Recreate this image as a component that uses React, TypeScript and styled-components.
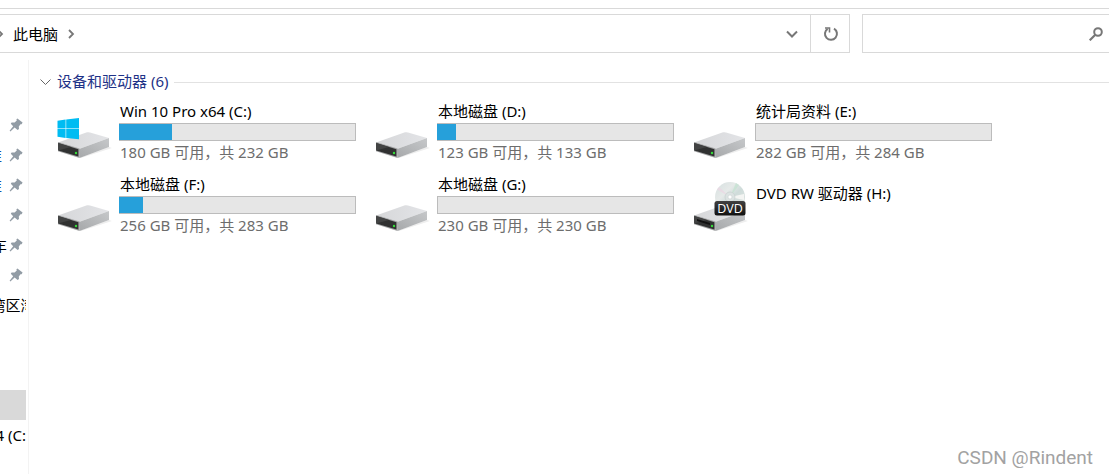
import React from "react";
import styled, { createGlobalStyle } from "styled-components";

const GlobalStyle = createGlobalStyle`
  * { box-sizing: border-box; }
  body {
    margin: 0;
    background: #fff;
    color: #000;
    font-family: "Noto Sans", "Noto Sans CJK SC", sans-serif;
    font-size: 15px;
    line-height: 20px;
    overflow: hidden;
  }
  button, input { font: inherit; color: inherit; padding: 0; margin: 0; background: none; border: 0; outline: 0; }
`;

const Window = styled.div`
  display: flex;
  flex-direction: column;
  min-height: 100vh;
`;

const Ribbon = styled.div`
  height: 9px;
  border-bottom: 1px solid #d9d9d9;
`;

const Toolbar = styled.header`
  display: flex;
  gap: 12px;
  padding-top: 5px;
  height: 51px;
`;

const AddressBar = styled.nav`
  flex: 1;
  display: flex;
  align-items: stretch;
  height: 39px;
  border: 1px solid #d9d9d9;
  border-left: 0;
`;

const Crumb = styled.button`
  margin: 0 9px 0 8px;
`;

const Chevron = styled.svg`
  align-self: center;
  flex: none;
`;

const Spacer = styled.div`
  flex: 1;
`;

const BarButton = styled.button<{ $divided?: boolean }>`
  display: flex;
  align-items: center;
  justify-content: center;
  width: ${(p) => (p.$divided ? 39 : 37)}px;
  padding-left: ${(p) => (p.$divided ? 1 : 0)}px;
  border-left: ${(p) => (p.$divided ? "1px solid #d9d9d9" : "0")};
`;

const SearchBox = styled.label`
  display: flex;
  align-items: center;
  flex: 0 0 247px;
  height: 39px;
  padding-right: 6px;
  border: 1px solid #d9d9d9;
  border-right: 0;
`;

const SearchInput = styled.input`
  flex: 1;
  min-width: 0;
  height: 100%;
`;

const Body = styled.div`
  flex: 1;
  display: flex;
`;

const Sidebar = styled.aside`
  flex: 0 0 29px;
  padding: 50px 2px 0 0;
  border-right: 1px solid #f3f3f3;
`;

const SideGap = styled.div`
  height: 10px;
`;

const SideItem = styled.button<{ $selected?: boolean }>`
  display: flex;
  align-items: center;
  width: 100%;
  height: 30px;
  background: ${(p) => (p.$selected ? "#d9d9d9" : "transparent")};
`;

const SideName = styled.span<{ $width: number; $fromEnd?: boolean; $blue?: boolean }>`
  display: flex;
  justify-content: ${(p) => (p.$fromEnd ? "flex-end" : "center")};
  width: ${(p) => p.$width}px;
  overflow: hidden;
  white-space: nowrap;
  color: ${(p) => (p.$blue ? "#0a50a8" : "#000")};
`;

const PinIcon = styled.svg`
  flex: none;
  margin-left: auto;
  margin-right: 3px;
`;

const Main = styled.main`
  flex: 1;
  position: relative;
  padding: 12px 0 0 11px;
`;

const GroupHeader = styled.h2`
  display: flex;
  align-items: center;
  gap: 6px;
  margin: 0;
  height: 20px;
  font-size: 15px;
  font-weight: 400;
  color: #1e3287;
`;

const GroupTitle = styled.span`
  padding-bottom: 2px;
`;

const Rule = styled.span`
  flex: 1;
  height: 1px;
  background: #e2e2e2;
`;

const DriveGrid = styled.ul`
  display: grid;
  grid-template-columns: repeat(auto-fill, 318px);
  grid-auto-rows: 73px;
  list-style: none;
  margin: 0;
  padding: 9px 0 0 17px;
`;

const Drive = styled.li`
  display: flex;
  gap: 7px;
`;

const DriveInfo = styled.div<{ $plain?: boolean }>`
  width: 237px;
  padding-top: ${(p) => (p.$plain ? "9px" : "0")};
`;

const DriveName = styled.div`
  height: 22px;
  padding-left: 1px;
`;

const Capacity = styled.div`
  display: flex;
  height: 18px;
  background: #e6e6e6;
  border: 1px solid #bcbcbc;
`;

const Used = styled.div`
  margin: 0 0 0 -1px;
  background: #26a0da;
`;

const DriveSpace = styled.div`
  height: 22px;
  padding: 1px 0 0 1px;
  color: #6d6d6d;
`;

const Watermark = styled.div`
  position: absolute;
  right: 16px;
  bottom: 4px;
  font-family: Roboto, "Liberation Sans", sans-serif;
  font-size: 19px;
  line-height: 24px;
  color: #a2a2a2;
`;

const Pin = () => (
  <PinIcon width="14" height="14" viewBox="0 0 14 14" aria-hidden="true">
    <path d="M8.4 0.4 13.6 4.6 12.6 6.2 11.5 6.2 9.8 8.4 10 11 8.6 12 5.6 9.6 1.4 13.4 0.6 12.8 4.2 8.2 1.8 5.8 2.6 4.6 5.6 4.6 7.8 2.6 7.4 1.3Z" fill="#929ca5" />
  </PinIcon>
);

type DriveKind = "windows" | "disk" | "dvd";

const DriveIcon = ({ kind, id }: { kind: DriveKind; id: string }) => (
  <svg width="55" height="62" viewBox="0 0 55 62" aria-hidden="true">
    <defs>
      <linearGradient id={`${id}top`} x1="0" y1="0" x2="1" y2="0">
        <stop offset="0" stopColor="#d6d7d9" />
        <stop offset="1" stopColor="#e3e4e7" />
      </linearGradient>
      <linearGradient id={`${id}side`} x1="0" y1="1" x2="1" y2="0">
        <stop offset="0" stopColor="#a6a8aa" />
        <stop offset="1" stopColor="#c6c8ca" />
      </linearGradient>
      <linearGradient id={`${id}disc`} x1="0" y1="0" x2="1" y2="1">
        <stop offset="0" stopColor="#d5dfdf" />
        <stop offset="0.35" stopColor="#e6eae9" />
        <stop offset="0.55" stopColor="#cfdcda" />
        <stop offset="1" stopColor="#e3e6e4" />
      </linearGradient>
      <linearGradient id={`${id}label`} x1="0" y1="0" x2="0" y2="1">
        <stop offset="0" stopColor="#414141" />
        <stop offset="1" stopColor="#101010" />
      </linearGradient>
    </defs>
    <path d="M22 57 52 46 55 47 24 57Z" fill="#eeeeee" />
    <path d="M1 41.5 30 31.3Q31.5 31 33 31.4L52 37 22 48Z" fill={`url(#${id}top)`} />
    <path d="M22 48 52 37V46L22.5 57Z" fill={`url(#${id}side)`} />
    <path d="M1 41 22.5 47.6V57L1 50.2Z" fill="#a2a3a4" />
    <path d="M1.2 42 21.4 48.3V55.4L1.2 49.6Z" fill="#303131" />
    <path d="M1.2 42 14 46 2 49.2Z" fill="#424343" />
    <circle cx="19" cy="52" r="1.2" fill="#35dc3a" />
    {kind === "windows" && (
      <g fill="#00bcf2">
        <path d="M0.5 19.7 8.6 18.5V27.2H0.5Z" />
        <path d="M9.2 18.4 22 17V27.2H9.2Z" />
        <path d="M0.5 27.8H8.6V36.9L0.5 35.8Z" />
        <path d="M9.2 27.8H22V38.3L9.2 37Z" />
      </g>
    )}
    {kind === "dvd" && (
      <g>
        <path d="M4 45 17 49V51L4 47Z" fill="#111" />
        <circle cx="37" cy="23" r="15" fill={`url(#${id}disc)`} />
        <path d="M37 23 24 15.5 26 13Z" fill="#ead8e4" opacity=".8" />
        <path d="M37 23 43 9 46 11Z" fill="#c5e2d2" opacity=".8" />
        <path d="M37 23 51 20V26Z" fill="#f4f5f3" />
        <circle cx="37" cy="23" r="5" fill="#dce3e2" stroke="#c5cdcc" strokeWidth=".6" />
        <circle cx="37" cy="23" r="2" fill="#fff" stroke="#c5cdcc" strokeWidth=".5" />
        <rect x="21.5" y="27" width="31" height="14.5" rx="2.5" fill={`url(#${id}label)`} />
        <text x="37" y="38.7" fill="#fff" fontSize="12.5" textAnchor="middle" fontFamily="Open Sans, sans-serif">DVD</text>
      </g>
    )}
  </svg>
);

interface DriveData {
  name: string;
  kind: DriveKind;
  space?: string;
  used?: number;
}

const drives: DriveData[] = [
  { name: "Win 10 Pro x64 (C:)", kind: "windows", space: "180 GB 可用，共 232 GB", used: 22.5 },
  { name: "本地磁盘 (D:)", kind: "disk", space: "123 GB 可用，共 133 GB", used: 8 },
  { name: "统计局资料 (E:)", kind: "disk", space: "282 GB 可用，共 284 GB", used: 0 },
  { name: "本地磁盘 (F:)", kind: "disk", space: "256 GB 可用，共 283 GB", used: 10 },
  { name: "本地磁盘 (G:)", kind: "disk", space: "230 GB 可用，共 230 GB", used: 0 },
  { name: "DVD RW 驱动器 (H:)", kind: "dvd" },
];

interface SideData {
  name?: string;
  width?: number;
  fromEnd?: boolean;
  blue?: boolean;
  pinned?: boolean;
  selected?: boolean;
}

const places: SideData[] = [
  { pinned: true },
  { name: "准", width: 2, fromEnd: true, blue: true, pinned: true },
  { name: "准", width: 2, fromEnd: true, blue: true, pinned: true },
  { pinned: true },
  { name: "车", width: 7, fromEnd: true, pinned: true },
  { pinned: true },
  { name: "湾区湾", width: 26 },
];

const devices: SideData[] = [
  {},
  {},
  { selected: true },
  { name: "4 (C:)", width: 26 },
];

const SideList = ({ items }: { items: SideData[] }) => (
  <>
    {items.map((p, i) => (
      <SideItem key={i} $selected={p.selected} aria-label={p.name ?? "位置"}>
        {p.name && (
          <SideName $width={p.width ?? 26} $fromEnd={p.fromEnd} $blue={p.blue}>
            {p.name}
          </SideName>
        )}
        {p.pinned && <Pin />}
      </SideItem>
    ))}
  </>
);

export default function App() {
  return (
    <Window>
      <GlobalStyle />
      <Ribbon />
      <Toolbar>
        <AddressBar aria-label="地址">
          <Chevron width="5" height="10" viewBox="0 0 5 10" fill="none" stroke="#777" strokeWidth="1.8">
            <path d="M-3 0 2 5-3 10" />
          </Chevron>
          <Crumb>此电脑</Crumb>
          <Chevron width="8" height="10" viewBox="0 0 8 10" fill="none" stroke="#777" strokeWidth="1.8">
            <path d="M2 1 6 5 2 9" />
          </Chevron>
          <Spacer />
          <BarButton aria-label="历史记录">
            <svg width="12" height="8" viewBox="0 0 12 8" fill="none" stroke="#777" strokeWidth="2">
              <path d="M1 1.5 6 6.5 11 1.5" />
            </svg>
          </BarButton>
          <BarButton $divided aria-label="刷新">
            <svg width="16" height="16" viewBox="0 0 16 16" fill="none" stroke="#777" strokeWidth="2">
              <path d="M11 2.6A6 6 0 1 1 4.6 2.8" />
              <path d="M2 2H6.5V6.5" strokeWidth="1.6" />
            </svg>
          </BarButton>
        </AddressBar>
        <SearchBox>
          <SearchInput aria-label="搜索" />
          <svg width="14" height="14" viewBox="0 0 14 14" fill="none" stroke="#777" strokeWidth="2" aria-hidden="true">
            <circle cx="9" cy="5" r="3.8" />
            <path d="M6.3 7.7 0.7 13.3" strokeWidth="2.2" />
          </svg>
        </SearchBox>
      </Toolbar>
      <Body>
        <Sidebar>
          <SideList items={places} />
          <SideGap />
          <SideList items={devices} />
        </Sidebar>
        <Main>
          <GroupHeader>
            <svg width="11" height="8" viewBox="0 0 11 8" fill="none" stroke="#666" aria-hidden="true">
              <path d="M0.5 1.5 5.5 6.5 10.5 1.5" />
            </svg>
            <GroupTitle>设备和驱动器 (6)</GroupTitle>
            <Rule />
          </GroupHeader>
          <DriveGrid>
            {drives.map((d, i) => (
              <Drive key={d.name}>
                <DriveIcon kind={d.kind} id={`drive${i}`} />
                <DriveInfo $plain={!d.space}>
                  <DriveName>{d.name}</DriveName>
                  {d.space && (
                    <>
                      <Capacity>
                        {!!d.used && <Used style={{ width: `${d.used}%` }} />}
                      </Capacity>
                      <DriveSpace>{d.space}</DriveSpace>
                    </>
                  )}
                </DriveInfo>
              </Drive>
            ))}
          </DriveGrid>
          <Watermark>CSDN @Rindent</Watermark>
        </Main>
      </Body>
    </Window>
  );
}
